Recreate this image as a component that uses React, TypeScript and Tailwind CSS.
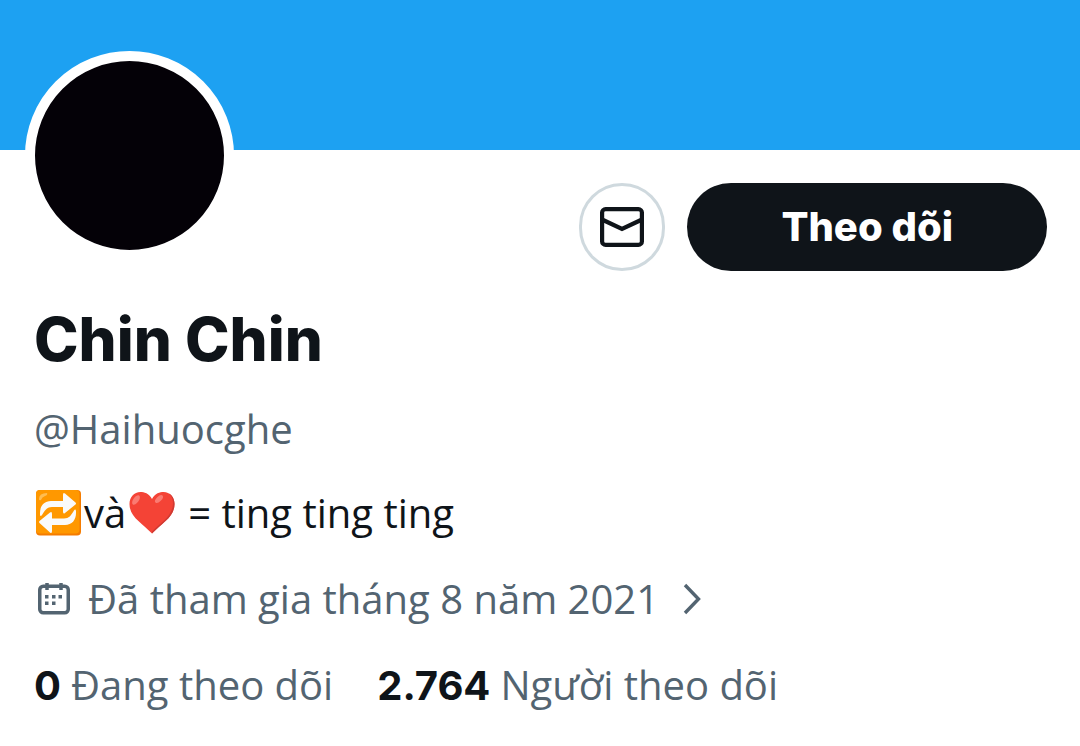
import type { ReactNode } from 'react';

interface Stat {
  value: string;
  label: string;
}

const profile = {
  name: 'Chin Chin',
  handle: '@Haihuocghe',
  joined: 'Đã tham gia tháng 8 năm 2021',
};

const stats: Stat[] = [
  { value: '0', label: 'Đang theo dõi' },
  { value: '2.764', label: 'Người theo dõi' },
];

function MailIcon() {
  return (
    <svg width="44" height="40" viewBox="0 0 44 40" fill="none" stroke="#0f1419" strokeWidth="4.2" aria-hidden="true">
      <rect x="2.1" y="2.1" width="39.8" height="35.8" rx="3.5" />
      <path d="M3 13l19 9 19-9" />
    </svg>
  );
}

function RepeatEmoji() {
  return (
    <svg role="img" aria-label="repeat" className="shrink-0" width="48" height="48" viewBox="0 0 48 48">
      <rect x="2" y="1" width="45" height="45.5" rx="4" fill="#f57c00" />
      <rect x="2" y="1" width="43.5" height="43.5" rx="4" fill="#ff9800" />
      <path d="M5 10q0-6 8-6q1 2-2 3q-3 1-4 4q-2 1-2-1z" fill="#ffbd52" />
      <path
        d="M6 26v-2c0-7 4-12 11-12h12V6q0-3 2-1.500l10.500 9q1 1 0 2l-10.500 8.500q-2 1.500-2-1.500v-4.500H18c-5 0-7 3-10 8q-1.500 2-2 0z"
        fill="#fafafa"
      />
      <path
        d="M42 22v2c0 7-4 12-11 12H18v6q0 3-2 1.500L5.500 34q-1-1 0-2L16 23.500q2-1.500 2 1.500v4.500H30c5 0 7-3 10-8q1.500-2 2 .500z"
        fill="#fafafa"
      />
    </svg>
  );
}

function HeartEmoji() {
  return (
    <svg role="img" aria-label="heart" className="shrink-0" width="48" height="48" viewBox="0 0 48 48">
      <path d="M24 10C21 4 16 3 12.500 3 6 3 1.500 8 1.500 15c0 13 12.500 19 22.500 29.500C34 34 46.500 28 46.500 15c0-7-4.500-12-11-12C32 3 27 4 24 10z" fill="#f44336" />
      <path d="M41 4.500c3 3 4 6 4 10.500-1 13-12 18-21 27.500v2C34 34 46.500 28 46.500 15c0-4.500-2-8.500-5.500-10.500z" fill="#cf3b34" />
      <ellipse cx="8" cy="11" rx="2.800" ry="5.500" transform="rotate(35 8 11)" fill="#fa7b72" />
      <ellipse cx="31" cy="10" rx="2.500" ry="5" transform="rotate(45 31 10)" fill="#fa7b72" />
    </svg>
  );
}

function CalendarIcon() {
  return (
    <svg width="32" height="32" viewBox="0 0 32 32" fill="none" stroke="#536471" strokeWidth="3.5" aria-hidden="true">
      <rect x="1.750" y="3.250" width="28.500" height="26.500" rx="3.500" />
      <path d="M9 0v7M23 0v7" />
      <path d="M7 13.700h3.500M14 13.700h3.500M20.500 13.700H24M7 20.300h3.500M14 20.300h3.500" />
    </svg>
  );
}

function ChevronIcon() {
  return (
    <svg width="18" height="32" viewBox="0 0 18 32" fill="none" stroke="#536471" strokeWidth="3.4" aria-hidden="true">
      <path d="M2 2l13.500 14L2 30" />
    </svg>
  );
}

function Line({ children }: { children: ReactNode }) {
  return <div className="flex items-center text-[40px] leading-[56px]">{children}</div>;
}

export default function App() {
  return (
    <main className="min-h-screen bg-white font-['Open_Sans',sans-serif] text-[#0f1419]">
      <div className="h-[150px] bg-[#1da1f2]" />

      <div className="flex items-start justify-between pr-[33px] pl-[25px]">
        <div className="-mt-[99px] size-[209px] rounded-full border-10 border-white bg-[#040107]" />
        <div className="flex gap-[22px] pt-[33px]">
          <button
            type="button"
            aria-label="Tin nhắn"
            className="flex h-[88px] w-[86px] items-center justify-center rounded-full border-3 border-[#cfd9de]"
          >
            <MailIcon />
          </button>
          <button
            type="button"
            className="h-[88px] rounded-full bg-[#0f1419] px-[94px] font-['Inter',sans-serif] text-[40px] font-extrabold text-white"
          >
            Theo dõi
          </button>
        </div>
      </div>

      <section className="px-[34px] pt-8">
        <h1 className="font-['Inter',sans-serif] text-[60px] leading-[72px] font-extrabold">{profile.name}</h1>
        <p className="mt-[26px] text-[40px] leading-[56px] text-[#536471]">{profile.handle}</p>

        <div className="mt-7 flex flex-col gap-[30px]">
          <Line>
            <RepeatEmoji />
            <span className="px-[2px]">và</span>
            <HeartEmoji />
            <span className="pl-3">= ting ting ting</span>
          </Line>
          <Line>
            <a href="#joined" className="flex items-center pl-1 text-[#536471]">
              <CalendarIcon />
              <span className="pr-6 pl-[18px]">{profile.joined}</span>
              <ChevronIcon />
            </a>
          </Line>
          <Line>
            <div className="flex gap-11">
              {stats.map((stat) => (
                <a key={stat.label} href="#follows" className="flex items-baseline gap-[10px]">
                  <span className="font-['Inter',sans-serif] font-bold">{stat.value}</span>
                  <span className="text-[#536471]">{stat.label}</span>
                </a>
              ))}
            </div>
          </Line>
        </div>
      </section>
    </main>
  );
}
